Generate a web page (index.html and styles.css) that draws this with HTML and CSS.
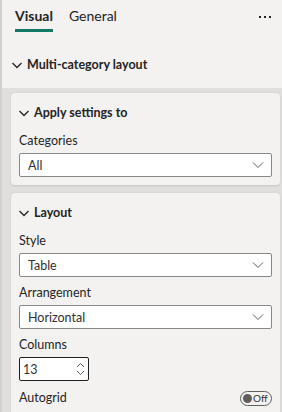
FILE: index.html
```html
<!DOCTYPE html>
<html>
<head>
<meta charset="utf-8">
<link rel="stylesheet" href="styles.css">
</head>
<body>
<div class="pane">
  <div class="top">
    <div class="tabs">
      <div class="tab active">Visual</div>
      <div class="tab">General</div>
      <div class="more"><span></span><span></span><span></span></div>
    </div>
    <div class="section-head">
      <svg class="chev" width="12" height="12" viewBox="0 0 12 12"><path d="M1.5 4 L6 8.5 L10.5 4" fill="none" stroke="#252423" stroke-width="1.3"/></svg>
      <span>Multi-category layout</span>
    </div>
  </div>
  <div class="body">
    <div class="card">
      <div class="card-head">
        <svg class="chev" width="12" height="12" viewBox="0 0 12 12"><path d="M1.5 4 L6 8.5 L10.5 4" fill="none" stroke="#252423" stroke-width="1.3"/></svg>
        <span>Apply settings to</span>
      </div>
      <div class="label">Categories</div>
      <div class="select"><span>All</span><svg width="12" height="8" viewBox="0 0 12 8"><path d="M1 1.5 L6 6.5 L11 1.5" fill="none" stroke="#605e5c" stroke-width="1"/></svg></div>
    </div>
    <div class="card last">
      <div class="card-head">
        <svg class="chev" width="12" height="12" viewBox="0 0 12 12"><path d="M1.5 4 L6 8.5 L10.5 4" fill="none" stroke="#252423" stroke-width="1.3"/></svg>
        <span>Layout</span>
      </div>
      <div class="label">Style</div>
      <div class="select"><span>Table</span><svg width="12" height="8" viewBox="0 0 12 8"><path d="M1 1.5 L6 6.5 L11 1.5" fill="none" stroke="#605e5c" stroke-width="1"/></svg></div>
      <div class="label">Arrangement</div>
      <div class="select"><span>Horizontal</span><svg width="12" height="8" viewBox="0 0 12 8"><path d="M1 1.5 L6 6.5 L11 1.5" fill="none" stroke="#605e5c" stroke-width="1"/></svg></div>
      <div class="label">Columns</div>
      <div class="spin"><span>13</span>
        <svg width="9" height="16" viewBox="0 0 9 16"><path d="M1 6 L4.5 2.5 L8 6 M1 10 L4.5 13.5 L8 10" fill="none" stroke="#605e5c" stroke-width="1"/></svg>
      </div>
      <div class="row">
        <div class="label inline">Autogrid</div>
        <div class="toggle"><span class="dot"></span><span class="off">Off</span></div>
      </div>
    </div>
  </div>
</div>
</body>
</html>
```
FILE: styles.css
```css
* { box-sizing: border-box; }
html, body { margin: 0; padding: 0; }
body {
  width: 282px;
  height: 412px;
  overflow: hidden;
  font-family: "Segoe UI", Lato, "Noto Sans", sans-serif;
  color: #252423;
  background: #e1dfdd;
}
.pane {
  border-left: 2px solid #d2d0ce;
  height: 412px;
  display: flex;
  flex-direction: column;
}
.top {
  background: #f3f2f1;
  height: 88px;
  flex: none;
}
.tabs {
  display: flex;
  align-items: flex-start;
  padding: 6px 0 0 13px;
  height: 32px;
}
.tab {
  font-size: 14px;
  line-height: 20px;
  padding-bottom: 3px;
  margin-right: 16px;
  color: #252423;
}
.tab.active {
  font-weight: 700;
  border-bottom: 3px solid #117865;
}
.more {
  margin-left: auto;
  margin-right: 11px;
  display: flex;
  gap: 3px;
  padding-top: 10px;
}
.more span {
  width: 2px;
  height: 2px;
  background: #252423;
}
.section-head {
  display: flex;
  align-items: center;
  gap: 4px;
  padding: 24px 0 0 9px;
  height: 18px;
  box-sizing: content-box;
  font-size: 12.5px;
  font-weight: 700;
  line-height: 18px;
}
.body {
  flex: 1;
  padding: 5px 2px 0 9px;
  display: flex;
  flex-direction: column;
  gap: 8px;
}
.card {
  background: #f3f2f1;
  border-radius: 4px;
  box-shadow: 0 0.5px 2px rgba(0,0,0,0.12);
  padding: 11px 8px 0 8px;
}
.card.last { flex: 1; border-bottom-left-radius: 0; border-bottom-right-radius: 0; }
.card-head {
  display: flex;
  align-items: center;
  gap: 4px;
  height: 18px;
  font-size: 12.5px;
  font-weight: 700;
  line-height: 18px;
  margin-left: -1px;
  margin-bottom: 11px;
}
.label {
  font-size: 12.5px;
  line-height: 16px;
  height: 16px;
  color: #252423;
  margin-bottom: 4px;
}
.select {
  height: 24px;
  background: #fff;
  border: 1px solid #8a8886;
  border-radius: 2px;
  display: flex;
  align-items: center;
  justify-content: space-between;
  padding: 0 7px 0 8px;
  font-size: 12.5px;
  color: #323130;
  margin-bottom: 8px;
}
.spin {
  width: 70px;
  height: 24px;
  background: #fff;
  border: 1px solid #201f1e;
  border-radius: 2px;
  display: flex;
  align-items: center;
  justify-content: space-between;
  padding: 0 3px 0 3px;
  font-size: 12.5px;
  color: #323130;
  margin-bottom: 9px;
}
.row {
  display: flex;
  align-items: center;
  justify-content: space-between;
  height: 16px;
}
.label.inline { margin-bottom: 0; }
.toggle {
  width: 32px;
  height: 15px;
  border: 1px solid #605e5c;
  border-radius: 8px;
  display: flex;
  align-items: center;
  padding-left: 2px;
  gap: 1px;
}
.dot {
  width: 9px;
  height: 9px;
  border-radius: 50%;
  background: #605e5c;
}
.off {
  font-size: 10px;
  line-height: 10px;
  color: #323130;
}
```
